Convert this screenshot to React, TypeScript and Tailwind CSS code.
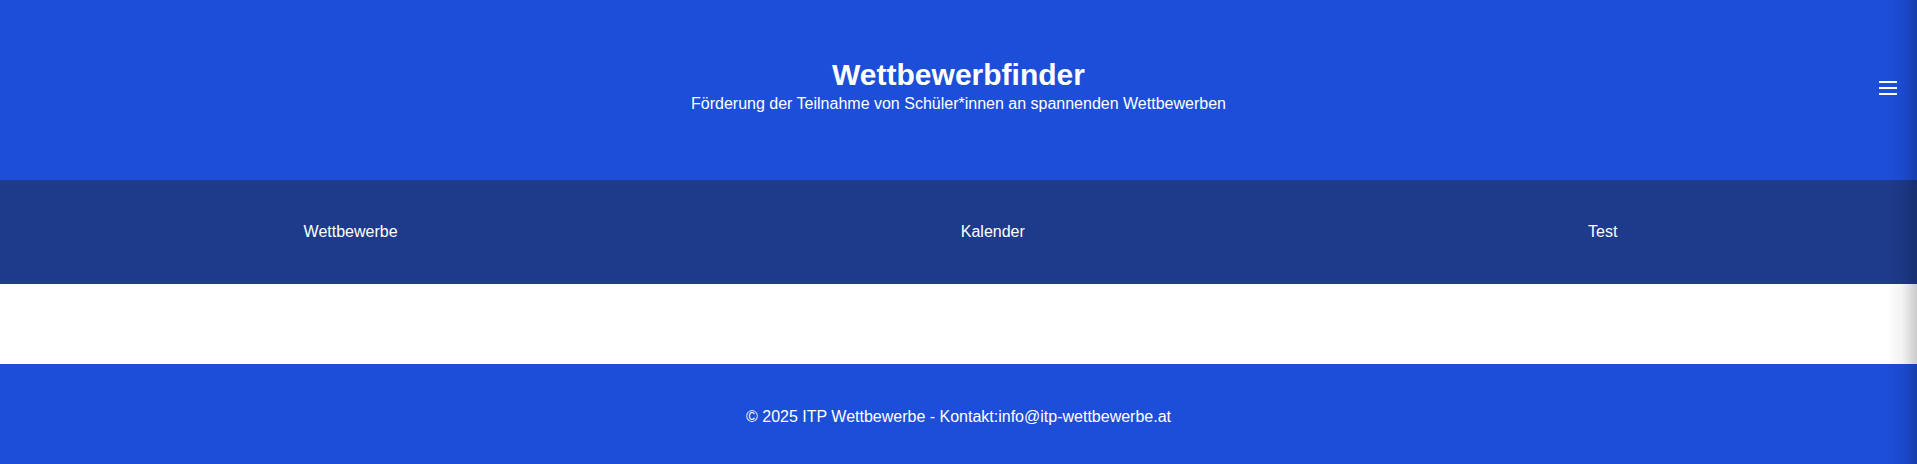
export default function App() {
  const links = ["Wettbewerbe", "Kalender", "Test"];

  return (
    <div className="relative min-h-[464px] overflow-hidden bg-white font-['Liberation_Sans',Arial,sans-serif] text-white">
      <header className="relative flex h-[180px] flex-col items-center justify-center bg-[#1d4ed8] pb-2">
        <h1 className="text-3xl leading-9 font-bold">Wettbewerbfinder</h1>
        <p className="-mt-px text-base leading-6">
          Förderung der Teilnahme von Schüler*innen an spannenden Wettbewerben
        </p>
        <button
          aria-label="Menü"
          className="absolute top-[81px] right-[20px] flex w-[18px] flex-col gap-[4px]"
        >
          <span className="h-[2px] w-full bg-white" />
          <span className="h-[2px] w-full bg-white" />
          <span className="h-[2px] w-full bg-white" />
        </button>
      </header>

      <nav className="bg-[#1e3a8a]">
        <ul className="flex h-[104px] items-center pr-[18px] pl-[22px]">
          {links.map((link) => (
            <li key={link} className="grow text-center text-base">
              <a href="#">{link}</a>
            </li>
          ))}
        </ul>
      </nav>

      <main className="h-[80px] bg-white" />

      <footer className="flex h-[100px] items-center justify-center bg-[#1d4ed8] pt-[6px]">
        <p className="text-base">© 2025 ITP Wettbewerbe - Kontakt:info@itp-wettbewerbe.at</p>
      </footer>

      {/* shadow of the off-canvas menu */}
      <div className="pointer-events-none absolute top-0 right-0 h-full w-[30px] bg-gradient-to-l from-black/20 via-black/5 to-transparent" />
    </div>
  );
}
